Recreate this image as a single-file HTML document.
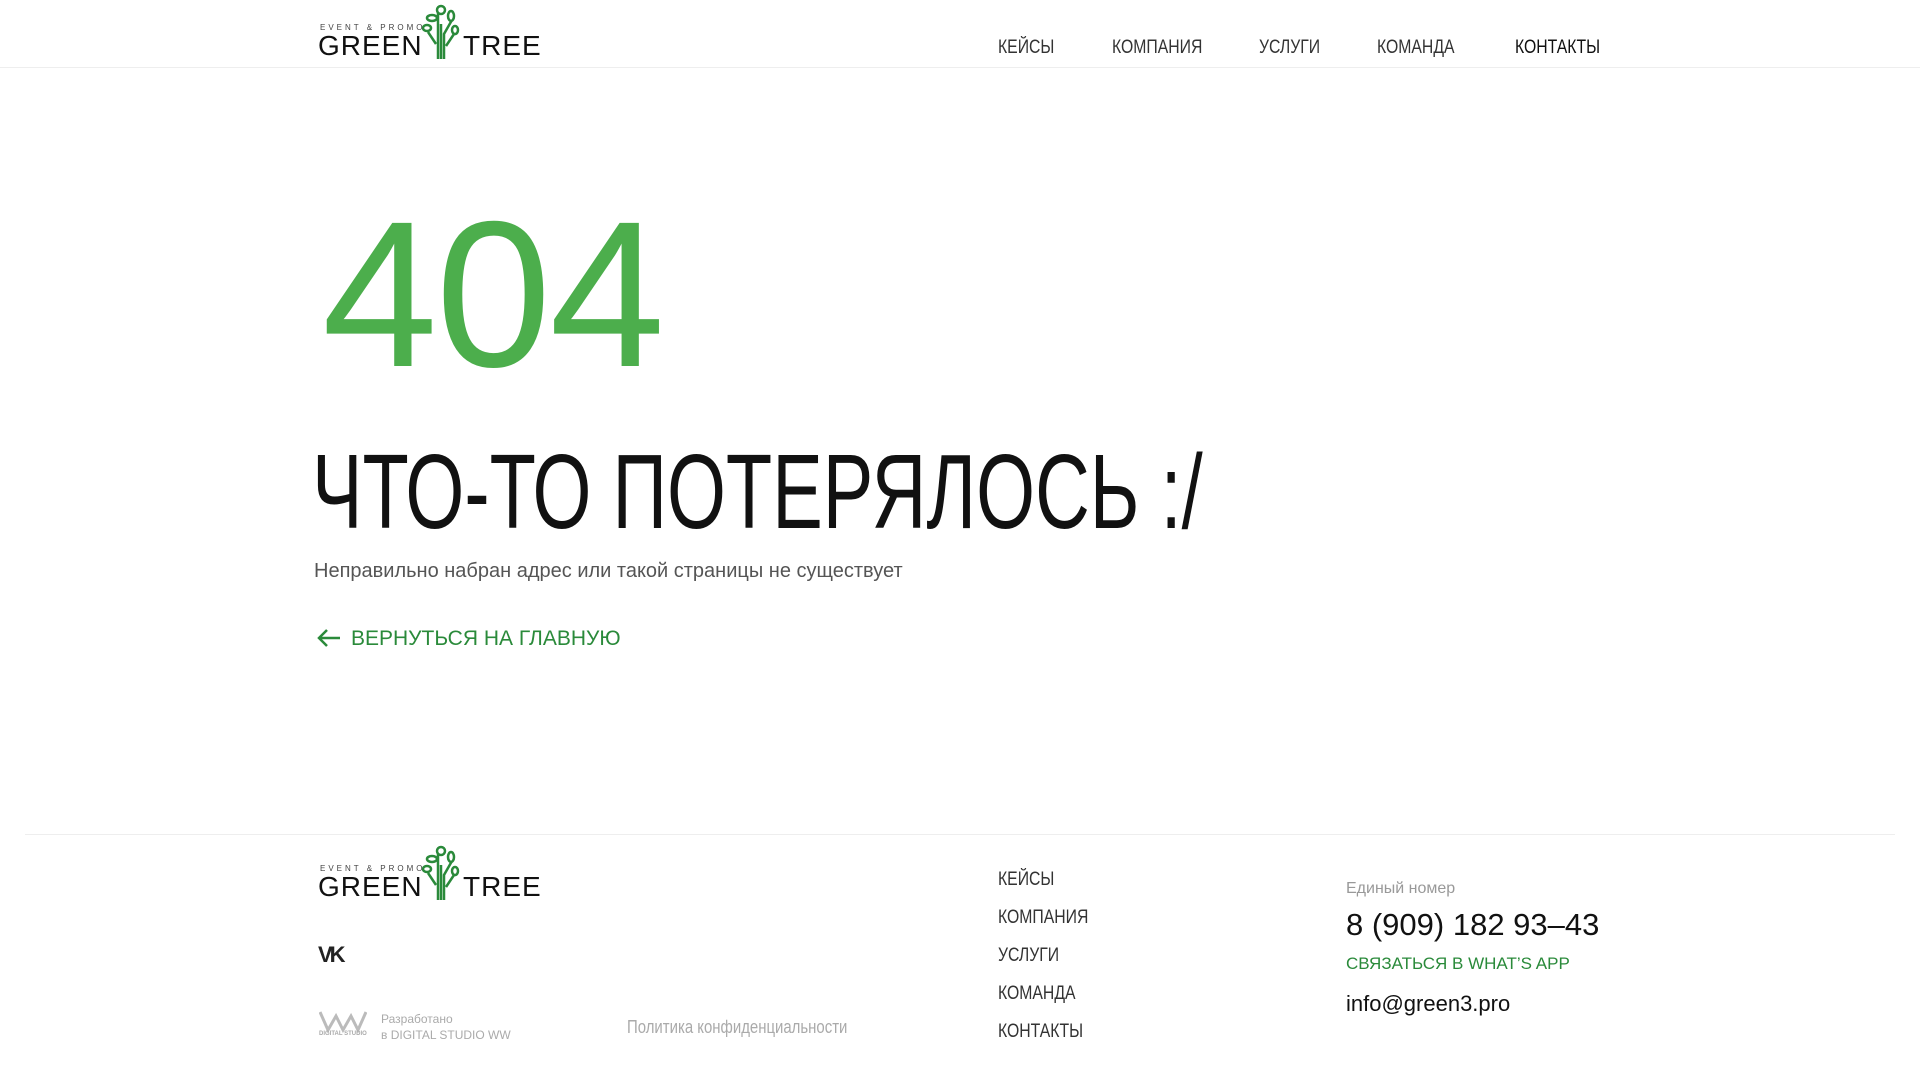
<!DOCTYPE html>
<html><head><meta charset="utf-8"><style>
body{margin:0;width:1920px;height:1075px;background:#fff;font-family:"Liberation Sans",sans-serif;position:relative;overflow:hidden;color:#111}
.a{position:absolute;white-space:nowrap}
.n{transform-origin:left top;transform:scaleX(.83);font-size:19px;color:#333}
.logo .s{font-size:8px;letter-spacing:3px;color:#444;position:absolute;left:2px;top:19px}
.logo .g{font-size:28px;letter-spacing:1px;position:absolute;left:0;top:26px;color:#111}
</style></head><body>
<div style="position:absolute;left:0;top:67px;width:1920px;height:1px;background:#eee"></div>
<div class="a logo" style="left:318px;top:4px;width:220px;height:56px">
<div class="s">EVENT &amp; PROMO</div><div class="g">GREEN</div><div class="g" style="left:145px">TREE</div>
<svg style="position:absolute;left:104px;top:0" width="38" height="55" viewBox="0 0 38 55" fill="none" stroke="#2a8a3a" stroke-width="2.5"><path d="M19 55V20M16 55V28 8M22 55V30l8-14M14 40L6 28M24 42l8-12"/><circle cx="19" cy="6" r="4"/><ellipse cx="10" cy="14" rx="5" ry="3"/><ellipse cx="29" cy="12" rx="3" ry="5"/><ellipse cx="5" cy="24" rx="4" ry="3"/><ellipse cx="33" cy="26" rx="3" ry="4"/></svg></div>
<div class="a n" style="left:998px;top:37px">КЕЙСЫ</div>
<div class="a n" style="left:1112px;top:37px">КОМПАНИЯ</div>
<div class="a n" style="left:1259px;top:37px">УСЛУГИ</div>
<div class="a n" style="left:1377px;top:37px">КОМАНДА</div>
<div class="a n" style="left:1515px;top:37px;color:#111">КОНТАКТЫ</div>
<div class="a" style="left:322px;top:191px;font-size:208px;color:#4cae4c;letter-spacing:-2px;line-height:1">404</div>
<div class="a" style="left:312px;top:439px;font-size:106px;line-height:1;transform-origin:left top;transform:scaleX(.715);color:#111">ЧТО-ТО ПОТЕРЯЛОСЬ :/</div>
<div class="a" style="left:314px;top:560px;font-size:20px;color:#555">Неправильно набран адрес или такой страницы не существует</div>
<svg class="a" style="left:316px;top:628px" width="26" height="20" viewBox="0 0 26 20" fill="none" stroke="#2a8a3a" stroke-width="2.5"><path d="M24 10H3M11 2L3 10l8 8"/></svg>
<div class="a" style="left:351px;top:627px;font-size:21px;color:#2a8a3a">ВЕРНУТЬСЯ НА ГЛАВНУЮ</div>
<div style="position:absolute;left:25px;top:834px;width:1870px;height:1px;background:#eee"></div>
<div class="a logo" style="left:318px;top:845px;width:220px;height:56px">
<div class="s">EVENT &amp; PROMO</div><div class="g">GREEN</div><div class="g" style="left:145px">TREE</div>
<svg style="position:absolute;left:104px;top:0" width="38" height="55" viewBox="0 0 38 55" fill="none" stroke="#2a8a3a" stroke-width="2.5"><path d="M19 55V20M16 55V28 8M22 55V30l8-14M14 40L6 28M24 42l8-12"/><circle cx="19" cy="6" r="4"/><ellipse cx="10" cy="14" rx="5" ry="3"/><ellipse cx="29" cy="12" rx="3" ry="5"/><ellipse cx="5" cy="24" rx="4" ry="3"/><ellipse cx="33" cy="26" rx="3" ry="4"/></svg></div>
<div class="a" style="left:318px;top:942px;font-size:22px;font-weight:bold;color:#222;letter-spacing:-3px">VK</div>
<svg class="a" style="left:319px;top:1010px" width="48" height="30" viewBox="0 0 48 30" fill="none" stroke="#bbb" stroke-width="3"><path d="M1 2l8 18 8-14 7 14 8-14 7 14 8-18"/></svg>
<div class="a" style="left:319px;top:1031px;font-size:6px;color:#aaa;font-weight:bold">DIGITAL STUDIO</div>
<div class="a" style="left:381px;top:1011px;font-size:12px;color:#aaa;line-height:16px">Разработано<br>в DIGITAL STUDIO WW</div>
<div class="a n" style="left:627px;top:1017px;color:#aaa;font-size:18px">Политика конфиденциальности</div>
<div class="a n" style="left:998px;top:869px">КЕЙСЫ</div>
<div class="a n" style="left:998px;top:907px">КОМПАНИЯ</div>
<div class="a n" style="left:998px;top:945px">УСЛУГИ</div>
<div class="a n" style="left:998px;top:983px">КОМАНДА</div>
<div class="a n" style="left:998px;top:1021px">КОНТАКТЫ</div>
<div class="a" style="left:1346px;top:880px;font-size:16px;color:#999">Единый номер</div>
<div class="a" style="left:1346px;top:907px;font-size:31px;color:#111">8 (909) 182 93–43</div>
<div class="a" style="left:1346px;top:954px;font-size:17px;color:#2a8a3a">СВЯЗАТЬСЯ В WHAT’S APP</div>
<div class="a" style="left:1346px;top:991px;font-size:22px;color:#111">info@green3.pro</div>
</body></html>
